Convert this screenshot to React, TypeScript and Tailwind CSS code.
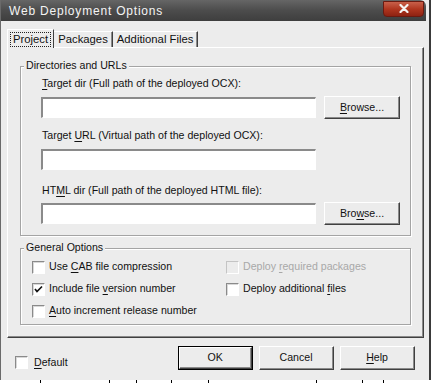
import React from "react";

const raised =
  "border-t border-l border-t-white border-l-white border-r border-b border-r-[#404040] border-b-[#404040] shadow-[inset_-1px_-1px_0_#8a8a8a]";
const sunken =
  "border-t-2 border-l-2 border-t-[#8a8a8a] border-l-[#8a8a8a] border-r border-b border-r-white border-b-white bg-white";

const Key: React.FC<{ children: React.ReactNode }> = ({ children }) => (
  <span className="underline underline-offset-[2px]">{children}</span>
);

const Button: React.FC<{ children: React.ReactNode; isDefault?: boolean; className?: string }> = ({
  children,
  isDefault,
  className = "",
}) => (
  <div className={`${isDefault ? "border border-black" : ""} ${className}`}>
    <div className={`w-full h-full flex items-center justify-center bg-[#ececec] ${raised}`}>{children}</div>
  </div>
);

const Checkbox: React.FC<{ checked?: boolean; disabled?: boolean }> = ({ checked, disabled }) => (
  <div
    className={`w-[13px] h-[13px] flex items-center justify-center border-t border-l border-r border-b ${
      disabled
        ? "border-t-[#c4c4c4] border-l-[#c4c4c4] border-r-white border-b-white bg-[#ececec]"
        : "border-t-[#8a8a8a] border-l-[#8a8a8a] border-r-white border-b-white bg-white shadow-[inset_1px_1px_0_#d8d8d8]"
    }`}
  >
    {checked && (
      <svg width="9" height="9" viewBox="0 0 9 9">
        <path d="M1 4 L3 6.5 L8 1.5" stroke="#111" strokeWidth="1.7" fill="none" />
      </svg>
    )}
  </div>
);

const Option: React.FC<{ checked?: boolean; disabled?: boolean; children: React.ReactNode }> = ({
  checked,
  disabled,
  children,
}) => (
  <div className="h-[22px] flex items-center gap-[4px]">
    <Checkbox checked={checked} disabled={disabled} />
    <span className={disabled ? "text-[#a8a8a8]" : "text-[#111]"}>{children}</span>
  </div>
);

const GroupBox: React.FC<{ title: string; className?: string; children: React.ReactNode }> = ({
  title,
  className = "",
  children,
}) => (
  <div
    className={`relative w-[391px] border border-[#a4a4a4] shadow-[inset_1px_1px_0_#fff,1px_1px_0_#fff] ${className}`}
  >
    {/* legend sits over the top edge */}
    <span className="absolute -top-[8px] left-[3px] px-[2px] bg-[#ececec] leading-[13px]">{title}</span>
    {children}
  </div>
);

export default function App() {
  return (
    <div className="w-[433px] h-[383px] bg-white overflow-hidden font-['Liberation_Sans',Arial,sans-serif] text-[10.6px] text-[#111]">
      <div className="w-[431px] h-[380px] bg-[#ececec] border-l border-l-[#6a6a6a] border-r-2 border-r-[#3a3a3a] flex flex-col">
        {/* Title bar */}
        <div className="h-[21px] w-[425px] rounded-tr-[6px] bg-gradient-to-b from-[#666] via-[#4c4c4c] to-[#3e3e3e] flex items-center justify-between">
          <span className="pl-[8px] text-[#f4f4f4] text-[12px] tracking-[0.8px]">Web Deployment Options</span>
          <div className="mr-[2px] mb-[4px] w-[41px] h-[16px] rounded-b-[4px] bg-gradient-to-b from-[#c8604a] via-[#b0361f] to-[#8e2212] border border-[#6a1a10] flex items-center justify-center">
            <svg width="10" height="9" viewBox="0 0 10 9">
              <path d="M1.5 1 L8.5 8 M8.5 1 L1.5 8" stroke="#f4f4f4" strokeWidth="2.2" strokeLinecap="round" />
            </svg>
          </div>
        </div>

        {/* Tabs */}
        <div className="ml-[6px] mt-[8px] flex items-end h-[18px] text-[11.3px]">
          <div className="relative z-10 -mb-px h-[19px] px-[2px] bg-[#ececec] border-t border-l border-t-white border-l-white border-r border-r-[#404040] flex items-center">
            <span className="border border-dotted border-[#222] px-[2px] leading-[13px]">Project</span>
          </div>
          <div className="h-[16px] px-[4px] border-t border-t-white border-r border-r-[#404040] shadow-[inset_-1px_0_0_#8a8a8a] flex items-center">
            Packages
          </div>
          <div className="h-[16px] px-[4px] border-t border-t-white border-r border-r-[#404040] shadow-[inset_-1px_0_0_#8a8a8a] flex items-center">
            Additional Files
          </div>
        </div>

        {/* Tab pane */}
        <div className="ml-[6px] w-[417px] h-[291px] border-t border-l border-t-white border-l-white border-r border-b border-r-[#404040] border-b-[#404040] shadow-[inset_-1px_-1px_0_#8a8a8a] pl-[12px] pt-[18px]">
          <GroupBox title="Directories and URLs" className="pl-[20px] pt-[10px] pb-[10px]">
            <div className="ml-px leading-[13px]">
              <Key>T</Key>arget dir (Full path of the deployed OCX):
            </div>
            <div className="mt-[6px] flex items-center gap-[8px] h-[23px]">
              <div className={`w-[275px] h-[21px] ${sunken}`} />
              <Button className="w-[76px] h-[23px]">
                <span>
                  <Key>B</Key>rowse...
                </span>
              </Button>
            </div>
            <div className="mt-[10px] ml-px leading-[13px]">
              Target <Key>U</Key>RL (Virtual path of the deployed OCX):
            </div>
            <div className={`mt-[7px] w-[275px] h-[21px] ${sunken}`} />
            <div className="mt-[14px] ml-px leading-[13px]">
              HT<Key>M</Key>L dir (Full path of the deployed HTML file):
            </div>
            <div className="mt-[5px] flex items-center gap-[8px] h-[23px]">
              <div className={`w-[275px] h-[21px] ${sunken}`} />
              <Button className="w-[76px] h-[23px]">
                <span>
                  Bro<Key>w</Key>se...
                </span>
              </Button>
            </div>
          </GroupBox>

          <GroupBox title="General Options" className="mt-[12px] pl-[11px] pt-[7px] pb-[2px]">
            <div className="grid grid-cols-[194px_1fr]">
              <Option>
                Use <Key>C</Key>AB file compression
              </Option>
              <Option disabled>
                Deploy <Key>r</Key>equired packages
              </Option>
              <Option checked>
                Include file <Key>v</Key>ersion number
              </Option>
              <Option>
                Deploy additional <Key>f</Key>iles
              </Option>
              <Option>
                <Key>A</Key>uto increment release number
              </Option>
            </div>
          </GroupBox>
        </div>

        {/* Bottom row */}
        <div className="flex items-start">
          <div className="ml-[14px] mt-[17px] flex items-center gap-[6px]">
            <Checkbox />
            <span>
              <Key>D</Key>efault
            </span>
          </div>
          <div className="ml-[110px] mt-[8px] flex gap-[6px]">
            <Button isDefault className="w-[75px] h-[24px]">
              OK
            </Button>
            <Button className="w-[75px] h-[24px]">Cancel</Button>
            <Button className="w-[75px] h-[24px]">
              <span>
                <Key>H</Key>elp
              </span>
            </Button>
          </div>
        </div>
      </div>
      <div className="h-[3px] flex">
        <div className="ml-[40px] w-px bg-black" />
        <div className="ml-[68px] w-px bg-black" />
        <div className="ml-[26px] w-px bg-black" />
        <div className="ml-[34px] w-px bg-black" />
        <div className="ml-[36px] w-px bg-black" />
        <div className="ml-[107px] w-px bg-black" />
        <div className="ml-[45px] w-px bg-black" />
        <div className="ml-[20px] w-px bg-black" />
      </div>
    </div>
  );
}
